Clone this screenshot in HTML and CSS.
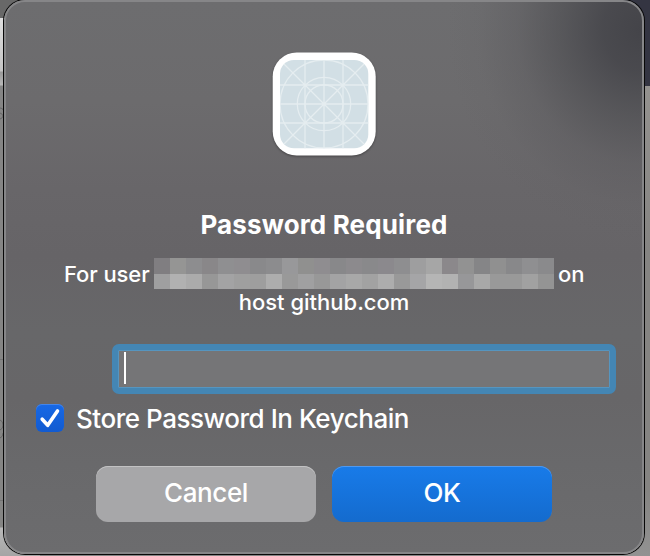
FILE: index.html
```html
<!DOCTYPE html>
<html lang="en">
<head>
<meta charset="utf-8">
<title>Password Required</title>
<link rel="stylesheet" href="styles.css">
</head>
<body>
<div class="desktop">
  <svg class="edge edge-left" viewBox="0 0 4 556" aria-hidden="true">
    <path d="M0 108q3 0 3 2M0 113q3 1 3 3t-3 3M0 420q3 1 3 5t-3 5M0 438q3-1 3-5" fill="none" stroke="#666" stroke-width="1"/>
    <path d="M0 359.5h4M0 500.5h4" stroke="#737373"/>
  </svg>
  <main class="dialog">
    <svg class="app-icon" viewBox="0 0 104 104" aria-hidden="true">
      <defs><clipPath id="tile"><rect x="8" y="8" width="88.3" height="88.3" rx="14"/></clipPath></defs>
      <rect x="0.7" y="0.5" width="103" height="103" rx="24" fill="#fff"/>
      <rect x="8" y="8" width="88.3" height="88.3" rx="14" fill="#d2dfe5"/>
      <g clip-path="url(#tile)" fill="none" stroke="#e5edf0" stroke-width="1.3">
        <path d="M33 8v89M52 8v89M71 8v89M8 33h89M8 52h89M8 71h89M8 8l88 88M96 8L8 96"/>
        <circle cx="52" cy="52" r="19"/><circle cx="52" cy="52" r="26.7"/><circle cx="52" cy="52" r="44"/>
      </g>
    </svg>
    <h1 class="title"><span>Password Required</span></h1>
    <div class="message">
      <div class="user-line"><span class="for-user">For user</span><span class="redacted" id="redacted"></span><span class="on">on</span></div>
      <div class="host">host github.com</div>
    </div>
    <div class="field"><i class="caret"></i></div>
    <div class="keychain">
      <span class="checkbox"><svg viewBox="0 0 28 28"><path d="M6.2 15.2l5.5 6.1L21.5 7" fill="none" stroke="#fff" stroke-width="3.6" stroke-linecap="round" stroke-linejoin="round"/></svg></span>
      <span class="keychain-label">Store Password In Keychain</span>
    </div>
    <div class="actions">
      <button class="button cancel"><span>Cancel</span></button>
      <button class="button ok"><span>OK</span></button>
    </div>
  </main>
</div>
<script src="script.js"></script>
</body>
</html>
```
FILE: styles.css
```css
* { box-sizing: border-box; }
body { margin: 0; overflow: hidden; font-family: Inter, "Liberation Sans", sans-serif; color: #fff; }
.desktop {
  display: flex;
  width: 650px;
  height: 556px;
  background:
    linear-gradient(#343542 0 86px, #94928f 86px, #858482 250px, #858482 490px, #929292) right / 40px 100% no-repeat,
    linear-gradient(#686868 0 18px, #dedede 18px, #c4c4c4 71px, #999 72px, #b8b8b8 85px, #858585 86px, #858584 527px, #b9b9b9 528px, #a5a5a5) left / 40px 100% no-repeat,
    #858585;
}
.edge-left { flex: none; width: 4px; height: 556px; }
.dialog {
  width: 640px;
  height: 554px;
  flex: none;
  display: flex;
  flex-direction: column;
  border: 2px solid #868688;
  border-radius: 21px;
  padding-top: 50px;
  box-shadow: 0 0 0 1px #080808;
  background:
    radial-gradient(ellipse 195px 210px at 100% 5%, #444449 0%, rgba(69,69,74,.88) 20%, rgba(75,75,79,.62) 42%, rgba(85,84,88,.32) 64%, rgba(95,94,97,.1) 84%, rgba(104,102,105,0) 100%),
    linear-gradient(#6d6d6f 0%, #6c6b6d 18%, #686669 34%, #666467 46%, #676769 60%, #676668 72%, #69696b 84%, #6c6c6e 100%);
}
.app-icon { width: 104px; height: 104px; margin-left: 266px; filter: drop-shadow(0 1px 1px rgba(0,0,0,.35)); }
.title { margin: 51px 0 0; font-size: 26px; line-height: 36px; font-weight: 700; text-align: center; letter-spacing: .15px; }
.message { margin-top: 15px; font-size: 22px; font-weight: 500; line-height: 28px; }
.user-line { display: flex; height: 31px; padding-left: 58px; line-height: 33px; }
.for-user { width: 90px; flex: none; white-space: nowrap; letter-spacing: -.1px; }
.redacted { width: 400px; display: grid; grid-template-columns: repeat(25, 16px); grid-template-rows: 16px 15px; }
.on { margin-left: 4px; }
.host { text-align: center; line-height: 27px; }
.field {
  width: 504px;
  height: 50px;
  margin: 28px 0 0 106px;
  padding: 1px 4px;
  border: 6px solid #4486b4;
  border-radius: 7px;
  background: #757577;
  box-shadow: inset 0 0 0 1px #5695bf;
}
.caret { display: block; width: 2px; height: 32px; margin: 1px 0 0 2px; background: #fff; }
.keychain { display: flex; height: 28px; margin: 10px 0 0 30px; align-items: center; }
.checkbox { width: 28px; height: 28px; border-radius: 6px; background: linear-gradient(#1769e6, #125bd0); box-shadow: inset 0 1px #4485e9; }
.checkbox svg { display: block; width: 28px; height: 28px; }
.keychain-label { margin: 2px 0 0 12px; font-size: 26px; line-height: 30px; white-space: nowrap; font-weight: 500; letter-spacing: -.46px; }
.actions { display: flex; gap: 16px; margin: 34px 0 0 90px; }
.button { width: 220px; height: 56px; padding: 0 0 2px; border: 0; border-radius: 12px; color: #fff; font: 500 26px/54px Inter, sans-serif; letter-spacing: -.4px; }
.cancel { background: #a7a7a9; box-shadow: inset 0 1px #c2c2c3; }
.ok { background: linear-gradient(#187be9, #146bce); box-shadow: inset 0 1px #4f99ef; }
```
FILE: script.js
```js
const rows = [
  "807e81 959594 8d8d8f 898789 8f8f91 8f8d90 89898b 8c8c8e 98989a 90908f 8f8d90 88888a 8c8a8d 89898b 8b898d 8e8e90 9e9e9f a6a6a6 8b888b 929292 858587 909090 88888a 8f8f91 8a8a8c",
  "9f9fa0 b1b1b1 ababab 979797 a3a3a4 9f9f9f 9e9e9e adadad 999999 a0a0a1 989898 a3a3a4 a8a8a8 a2a2a2 adadad 999999 a5a5a7 b5b5b5 b2b2b2 979799 a8a8a8 999999 999999 a1a1a1 949494"
];
const mosaic = document.getElementById("redacted");
rows.join(" ").split(" ").forEach(color => {
  const cell = document.createElement("i");
  cell.style.backgroundColor = "#" + color;
  mosaic.append(cell);
});
```
